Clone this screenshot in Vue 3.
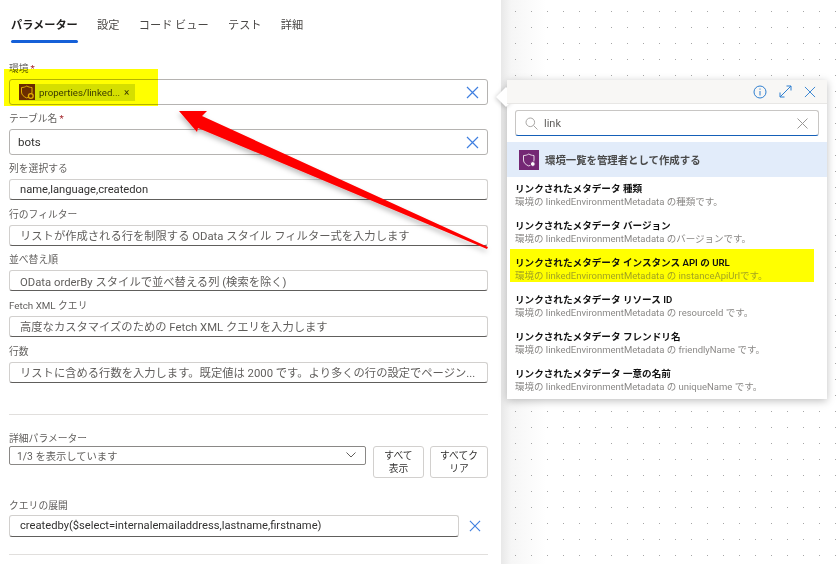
<template>
  <div class="page">
    <section class="left">
      <nav class="tabs">
        <a v-for="(tab, i) in tabs" :key="tab" class="tab" :class="{ active: i === 0 }">{{ tab }}</a>
      </nav>

      <div class="field first">
        <label>環境<i>*</i></label>
        <div class="box tall">
          <span class="chip">
            <span class="chip-icon">
              <svg width="16" height="16" viewBox="0 0 16 16" fill="none" stroke="#e2ae3c" stroke-width="1">
                <path d="M2.500 3.500c2.200 0 3.800-.6 5.300-1.500 1.500.9 3.200 1.500 5.200 1.500v4.500c0 3-2.500 4.800-5.200 6-2.800-1.200-5.300-3-5.300-6z" />
                <circle cx="11.800" cy="12" r="2.400" fill="#6b2c00" stroke="#e2ae3c" stroke-width="1.300" />
              </svg>
            </span>
            <span class="chip-text">properties/linked...</span>
            <span class="chip-x">×</span>
          </span>
          <svg class="clear" width="13" height="13" viewBox="0 0 13 13"><path d="M1 1l11 11M12 1L1 12" /></svg>
        </div>
      </div>

      <div class="field">
        <label>テーブル名<i>*</i></label>
        <div class="box tall">
          <span class="value bots">bots</span>
          <svg class="clear" width="13" height="13" viewBox="0 0 13 13"><path d="M1 1l11 11M12 1L1 12" /></svg>
        </div>
      </div>

      <div v-for="f in fields" :key="f.label" class="field">
        <label>{{ f.label }}</label>
        <div class="box line" :class="{ placeholder: f.placeholder }">
          <span class="value">{{ f.text }}</span>
        </div>
      </div>

      <hr class="rule top-rule" />

      <div class="adv">
        <label>詳細パラメーター</label>
        <div class="adv-row">
          <div class="select">
            <span>1/3 を表示しています</span>
            <svg width="10" height="6" viewBox="0 0 10 6"><path d="M.5.5L5 5l4.500-4.500" /></svg>
          </div>
          <button class="btn show">すべて表示</button>
          <button class="btn wipe">すべてクリア</button>
        </div>
      </div>

      <div class="expand">
        <label>クエリの展開</label>
        <div class="expand-row">
          <div class="box line grow"><span class="value">createdby($select=internalemailaddress,lastname,firstname)</span></div>
          <svg class="clear" width="12" height="12" viewBox="0 0 13 13"><path d="M1 1l11 11M12 1L1 12" /></svg>
        </div>
      </div>

      <hr class="rule end-rule" />
    </section>

    <section class="canvas"></section>

    <aside class="panel">
      <span class="notch"></span>
      <header class="panel-head">
        <svg width="14" height="14" viewBox="0 0 14 14" fill="none" stroke="#2f7fd0"><circle cx="7" cy="7" r="6" /><path d="M7 6v4.500M7 3.500v1.200" /></svg>
        <svg width="13" height="13" viewBox="0 0 13 13" fill="none" stroke="#2f7fd0"><path d="M1 12L12 1M7.500 1H12v4.500M1 7.500V12h4.500" /></svg>
        <svg width="12" height="12" viewBox="0 0 13 13" fill="none" stroke="#2f7fd0"><path d="M1 1l11 11M12 1L1 12" /></svg>
      </header>
      <div class="search">
        <svg width="13" height="13" viewBox="0 0 13 13" fill="none" stroke="#a8a6a4"><circle cx="5.300" cy="5.300" r="4.300" /><path d="M8.500 8.500l4 4" /></svg>
        <span>link</span>
        <svg class="search-x" width="11" height="11" viewBox="0 0 11 11" fill="none" stroke="#9a9896"><path d="M.5.5l10 10M10.500.5l-10 10" /></svg>
      </div>
      <div class="group">
        <span class="group-icon">
          <svg width="16" height="16" viewBox="0 0 16 16" fill="none" stroke="#e6d6e6" stroke-width="1">
            <path d="M2.500 3.500c2.200 0 3.800-.6 5.300-1.500 1.500.9 3.200 1.500 5.200 1.500v4.500c0 3-2.500 4.800-5.200 6-2.800-1.200-5.300-3-5.300-6z" />
            <circle cx="11.800" cy="12" r="2.400" fill="#fff" stroke="#742774" />
          </svg>
        </span>
        <span>環境一覧を管理者として作成する</span>
      </div>
      <ul class="items">
        <li v-for="item in items" :key="item.title" class="item">
          <strong>{{ item.title }}</strong>
          <small>{{ item.desc }}</small>
        </li>
      </ul>
      <div class="mark-row"></div>
    </aside>

    <div class="mark-field"></div>

    <svg class="arrow" width="837" height="564" viewBox="0 0 837 564">
      <defs>
        <filter id="arrow-shadow" x="-10%" y="-10%" width="120%" height="130%">
          <feDropShadow dx="-1" dy="3" stdDeviation="2.500" flood-color="#000" flood-opacity="0.25" />
        </filter>
      </defs>
      <polygon points="179,111 207,111 202,116 488,247 487,249 198,128 197,132" fill="#fe0000" filter="url(#arrow-shadow)" />
    </svg>
  </div>
</template>

<script setup>
const tabs = ['パラメーター', '設定', 'コード ビュー', 'テスト', '詳細']

const fields = [
  { label: '列を選択する', text: 'name,language,createdon' },
  { label: '行のフィルター', text: 'リストが作成される行を制限する OData スタイル フィルター式を入力します', placeholder: true },
  { label: '並べ替え順', text: 'OData orderBy スタイルで並べ替える列 (検索を除く)', placeholder: true },
  { label: 'Fetch XML クエリ', text: '高度なカスタマイズのための Fetch XML クエリを入力します', placeholder: true },
  { label: '行数', text: 'リストに含める行数を入力します。既定値は 2000 です。より多くの行の設定でページン...', placeholder: true },
]

const items = [
  { title: 'リンクされたメタデータ 種類', desc: '環境の linkedEnvironmentMetadata の種類です。' },
  { title: 'リンクされたメタデータ バージョン', desc: '環境の linkedEnvironmentMetadata のバージョンです。' },
  { title: 'リンクされたメタデータ インスタンス API の URL', desc: '環境の linkedEnvironmentMetadata の instanceApiUrlです。' },
  { title: 'リンクされたメタデータ リソース ID', desc: '環境の linkedEnvironmentMetadata の resourceId です。' },
  { title: 'リンクされたメタデータ フレンドリ名', desc: '環境の linkedEnvironmentMetadata の friendlyName です。' },
  { title: 'リンクされたメタデータ 一意の名前', desc: '環境の linkedEnvironmentMetadata の uniqueName です。' },
]
</script>

<style>
html, body { margin: 0; background: #fff; overflow: hidden; }
</style>

<style scoped>
.page {
  position: relative;
  display: flex;
  width: 837px;
  height: 564px;
  overflow: hidden;
  font-family: Roboto, "Noto Sans CJK JP", sans-serif;
  color: #323130;
}
.left {
  width: 479px;
  flex: none;
  padding: 0 13px 0 9px;
  background: #fff;
  z-index: 1;
}
.canvas {
  flex: 1;
  background-color: #fff;
  background-image:
    radial-gradient(circle at 14.500px 11.500px, #a6a6a6 0.6px, transparent 0.9px),
    linear-gradient(to right, #e8e8e8, #f6f6f6 10px, #fff 45px);
  background-size: 16px 16px, 100% 100%;
}
.tabs {
  display: flex;
  gap: 19.300px;
  height: 43px;
  box-sizing: border-box;
  padding: 18px 0 0 2px;
}
.tab {
  font-size: 11.200px;
  line-height: 16px;
  color: #4a4846;
}
.tab.active {
  position: relative;
  font-weight: 600;
  color: #201f1e;
}
.tab.active::after {
  content: "";
  position: absolute;
  left: 0;
  right: 0;
  top: 22px;
  height: 3px;
  border-radius: 2px;
  background: #1560d8;
}
.field label, .adv label, .expand label {
  display: block;
  height: 14px;
  font-size: 9.800px;
  line-height: 16px;
  color: #605e5c;
}
.field label i {
  font-style: normal;
  color: #a4262c;
  margin-left: 2px;
}
.field.first { margin-top: 18px; }
.field { margin-bottom: 6.670px; }
.field:has(.tall) { margin-bottom: 6px; }
.box {
  display: flex;
  align-items: center;
  box-sizing: border-box;
  width: 479px;
  margin-top: 4px;
  border: 1px solid #b5b3b1;
  border-radius: 3px;
  background: #fff;
}
.box.tall { height: 26px; padding: 0 8px; justify-content: space-between; }
.box.line {
  height: 21px;
  padding: 0 10px;
  border-color: #d2d0ce #d2d0ce #605e5c;
  overflow: hidden;
}
.value {
  font-size: 11.200px;
  color: #323130;
  white-space: nowrap;
}
.bots { font-size: 11.500px; }
.placeholder .value { color: #605e5c; font-size: 11.300px; }
.clear { flex: none; }
.clear path { stroke: #3f7fe0; stroke-width: 1.200; fill: none; }
.chip {
  display: flex;
  align-items: center;
  height: 17px;
  padding-right: 3px;
  margin-left: 1px;
  background: #d5df00;
}
.chip-icon {
  display: flex;
  align-items: center;
  justify-content: center;
  width: 16px;
  height: 16px;
  background: #6b2c00;
}
.chip-text {
  margin-left: 4px;
  font-size: 9.700px;
  color: #3a3a00;
}
.chip-x {
  margin-left: 4px;
  font-size: 10px;
  width: 8px;
  color: #3a3a00;
}
.rule {
  margin: 0;
  border: 0;
  height: 1px;
  background: #e1dfdd;
}
.top-rule { margin-top: 31.300px; }
.adv { margin-top: 16px; }
.adv-row {
  display: flex;
  align-items: flex-start;
  margin-top: 1px;
}
.select {
  display: flex;
  align-items: center;
  justify-content: space-between;
  box-sizing: border-box;
  width: 357px;
  height: 19px;
  padding: 0 9px 0 7px;
  border: 1px solid #8a8886;
  border-radius: 2px;
  font-size: 10.300px;
  color: #605e5c;
}
.select svg path { fill: none; stroke: #605e5c; }
.btn {
  box-sizing: border-box;
  height: 32px;
  padding: 0 6px;
  border: 1px solid #d2d0ce;
  border-radius: 3px;
  background: #fff;
  font-family: inherit;
  font-size: 9.800px;
  line-height: 13px;
  color: #323130;
}
.show { width: 51px; margin-left: 7px; padding: 0 9px; }
.wipe { width: 58px; margin-left: 6px; }
.expand { margin-top: 20px; }
.expand-row {
  display: flex;
  align-items: center;
  margin-top: 3px;
}
.box.grow { width: 450px; height: 22px; margin-top: 0; }
.expand-row .clear { margin-left: 10px; }
.end-rule { margin-top: 17px; }

.panel {
  position: absolute;
  left: 507px;
  top: 80px;
  width: 320px;
  height: 319px;
  background: #fff;
  box-shadow: 0 2px 8px rgba(0, 0, 0, 0.25);
  z-index: 2;
}
.notch {
  position: absolute;
  left: -11px;
  top: 7px;
  width: 20px;
  height: 20px;
  filter: drop-shadow(-1px 1px 2px rgba(0, 0, 0, 0.2));
}
.notch::before {
  content: "";
  display: block;
  width: 20px;
  height: 20px;
  background: #fff;
  clip-path: polygon(50% 0, 100% 50%, 50% 100%, 0 50%);
}
.panel-head {
  position: relative;
  display: flex;
  align-items: center;
  justify-content: flex-end;
  gap: 12px;
  height: 23px;
  padding-right: 11px;
  background: #f8f7f5;
  border-bottom: 1px solid #e8e7e5;
}
.search {
  position: relative;
  display: flex;
  align-items: center;
  gap: 6px;
  box-sizing: border-box;
  width: 304px;
  height: 26px;
  margin: 6px 0 6px 8px;
  padding-left: 9px;
  border: 1px solid #c8c6c4;
  border-bottom: 1px solid #1560b8;
  border-radius: 3px;
  font-size: 11px;
  color: #605e5c;
}
.search-x { position: absolute; right: 10px; top: 7px; }
.group {
  display: flex;
  align-items: center;
  gap: 6px;
  height: 35px;
  padding-left: 12px;
  background: #e2ecfa;
  font-size: 10.400px;
  font-weight: 600;
  color: #4a4a4a;
}
.group-icon {
  display: flex;
  align-items: center;
  justify-content: center;
  width: 20px;
  height: 20px;
  background: #742774;
}
.items {
  position: relative;
  z-index: 1;
  list-style: none;
  margin: 0;
  padding: 4px 0 0 8px;
}
.item {
  height: 37px;
  box-sizing: border-box;
  white-space: nowrap;
}
.item strong {
  display: block;
  height: 14px;
  font-size: 9.600px;
  line-height: 16px;
  font-weight: 600;
  color: #111;
}
.item small {
  display: block;
  height: 13px;
  font-size: 9.500px;
  line-height: 13px;
  color: #8a8886;
}
.item:nth-child(3) small { color: #a3a320; }
.mark-row {
  position: absolute;
  left: 3px;
  top: 169px;
  width: 304px;
  height: 33px;
  background: #ff0;
}
.mark-field {
  position: absolute;
  left: 4px;
  top: 69px;
  width: 154px;
  height: 37px;
  background: #ff0;
  mix-blend-mode: multiply;
  z-index: 3;
}
.arrow {
  position: absolute;
  left: 0;
  top: 0;
  z-index: 4;
  pointer-events: none;
}
</style>
